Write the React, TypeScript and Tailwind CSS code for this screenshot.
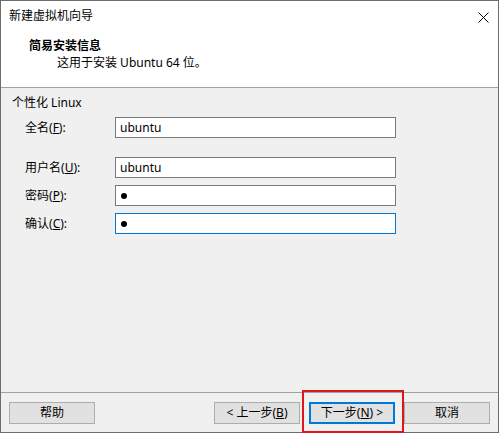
import React from 'react';

const font = { fontFamily: '"Noto Sans", "Noto Sans CJK SC", sans-serif' };

// label with an underlined access key, e.g. 全名(F):
function Label({ text, accel }: { text: string; accel: string }) {
  return (
    <span>
      {text}(<span className="underline">{accel}</span>):
    </span>
  );
}

function Field({ value, focused, secret }: { value: string; focused?: boolean; secret?: boolean }) {
  return (
    <div
      className={
        'flex h-[21px] w-[281px] items-center bg-white pl-[4px] ' +
        (focused ? 'border border-[#0078d7]' : 'border border-[#7a7a7a]')
      }
    >
      {secret ? (
        <span className="ml-[1px] inline-block h-[6px] w-[6px] rounded-full bg-black" />
      ) : (
        <span>{value}</span>
      )}
    </div>
  );
}

function Button({ children, primary }: { children: React.ReactNode; primary?: boolean }) {
  return (
    <div
      className={
        'flex h-[22px] w-[86px] items-center justify-center bg-[#e1e1e1] ' +
        (primary ? 'border-2 border-[#0078d7]' : 'border border-[#adadad]')
      }
    >
      {children}
    </div>
  );
}

export default function App() {
  return (
    <div
      className="relative flex h-[433px] w-[499px] flex-col border border-[#6d6d6d] bg-white text-[12px] leading-[16px] text-black"
      style={font}
    >
      {/* 标题栏 + 页眉 */}
      <div className="h-[86px] bg-white">
        <div className="flex items-center justify-between pl-[8px] pr-[9px] pt-[7px]">
          <span>新建虚拟机向导</span>
          <svg width="11" height="11" viewBox="0 0 11 11" className="mt-[2px]">
            <path d="M0.5 0.5 L10.5 10.5 M10.5 0.5 L0.5 10.5" stroke="#000" strokeWidth="1" fill="none" />
          </svg>
        </div>
        <div className="pl-[28px] pt-[14px] font-bold">简易安装信息</div>
        <div className="pl-[56px] pt-[1px]">这用于安装 Ubuntu 64 位。</div>
      </div>
      <div className="h-px bg-[#a0a0a0]" />

      {/* 主体 */}
      <div className="flex-1 bg-[#f0f0f0] pl-[11px] pt-[7px]">
        <div>个性化 Linux</div>
        <div className="mt-[6px] flex flex-col pl-[13px]">
          <div className="flex items-center">
            <div className="w-[90px]"><Label text="全名" accel="F" /></div>
            <Field value="ubuntu" />
          </div>
          <div className="mt-[19px] flex items-center">
            <div className="w-[90px]"><Label text="用户名" accel="U" /></div>
            <Field value="ubuntu" />
          </div>
          <div className="mt-[7px] flex items-center">
            <div className="w-[90px]"><Label text="密码" accel="P" /></div>
            <Field value="" secret />
          </div>
          <div className="mt-[7px] flex items-center">
            <div className="w-[90px]"><Label text="确认" accel="C" /></div>
            <Field value="" secret focused />
          </div>
        </div>
      </div>

      {/* 底部按钮 */}
      <div className="h-px bg-[#a0a0a0]" />
      <div className="flex h-[39px] items-start bg-[#f0f0f0] pl-[8px] pr-[8px] pt-[9px]">
        <Button>帮助</Button>
        <div className="flex-1" />
        <Button>
          &lt; 上一步(<span className="underline">B</span>)
        </Button>
        <div className="ml-[9px]">
          <Button primary>
            下一步(<span className="underline">N</span>) &gt;
          </Button>
        </div>
        <div className="ml-[9px]">
          <Button>取消</Button>
        </div>
      </div>

      {/* 红色标注框 */}
      <div className="pointer-events-none absolute left-[301px] top-[389px] h-[43px] w-[102px] border-2 border-[#e0161f]" />
    </div>
  );
}
